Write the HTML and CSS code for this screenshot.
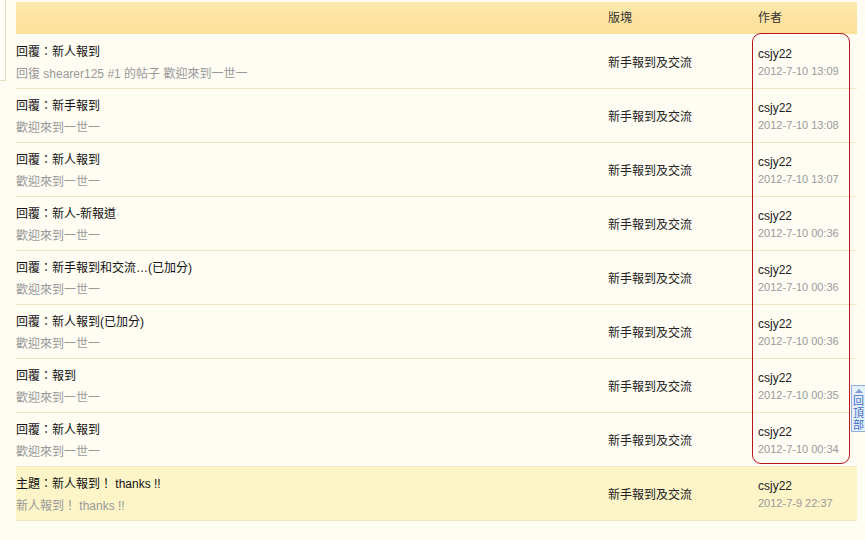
FILE: index.html
```html
<!DOCTYPE html>
<html>
<head>
<meta charset="utf-8">
<link rel="stylesheet" href="styles.css">
</head>
<body>
<div class="side-edge"></div>
<div class="list">
  <div class="head">
    <div class="c1"></div>
    <div class="c2">版塊</div>
    <div class="c3">作者</div>
  </div>
  <div class="row">
    <div class="c1"><div class="t">回覆：新人報到</div><div class="s">回復 shearer125 #1 的帖子 歡迎來到一世一</div></div>
    <div class="c2">新手報到及交流</div>
    <div class="c3"><div class="u">csjy22</div><div class="d">2012-7-10 13:09</div></div>
  </div>
  <div class="row">
    <div class="c1"><div class="t">回覆：新手報到</div><div class="s">歡迎來到一世一</div></div>
    <div class="c2">新手報到及交流</div>
    <div class="c3"><div class="u">csjy22</div><div class="d">2012-7-10 13:08</div></div>
  </div>
  <div class="row">
    <div class="c1"><div class="t">回覆：新人報到</div><div class="s">歡迎來到一世一</div></div>
    <div class="c2">新手報到及交流</div>
    <div class="c3"><div class="u">csjy22</div><div class="d">2012-7-10 13:07</div></div>
  </div>
  <div class="row">
    <div class="c1"><div class="t">回覆：新人-新報道</div><div class="s">歡迎來到一世一</div></div>
    <div class="c2">新手報到及交流</div>
    <div class="c3"><div class="u">csjy22</div><div class="d">2012-7-10 00:36</div></div>
  </div>
  <div class="row">
    <div class="c1"><div class="t">回覆：新手報到和交流…(已加分)</div><div class="s">歡迎來到一世一</div></div>
    <div class="c2">新手報到及交流</div>
    <div class="c3"><div class="u">csjy22</div><div class="d">2012-7-10 00:36</div></div>
  </div>
  <div class="row">
    <div class="c1"><div class="t">回覆：新人報到(已加分)</div><div class="s">歡迎來到一世一</div></div>
    <div class="c2">新手報到及交流</div>
    <div class="c3"><div class="u">csjy22</div><div class="d">2012-7-10 00:36</div></div>
  </div>
  <div class="row">
    <div class="c1"><div class="t">回覆：報到</div><div class="s">歡迎來到一世一</div></div>
    <div class="c2">新手報到及交流</div>
    <div class="c3"><div class="u">csjy22</div><div class="d">2012-7-10 00:35</div></div>
  </div>
  <div class="row">
    <div class="c1"><div class="t">回覆：新人報到</div><div class="s">歡迎來到一世一</div></div>
    <div class="c2">新手報到及交流</div>
    <div class="c3"><div class="u">csjy22</div><div class="d">2012-7-10 00:34</div></div>
  </div>
  <div class="row topic">
    <div class="c1"><div class="t">主題：新人報到！ thanks !!</div><div class="s">新人報到！ thanks !!</div></div>
    <div class="c2">新手報到及交流</div>
    <div class="c3"><div class="u">csjy22</div><div class="d">2012-7-9 22:37</div></div>
  </div>
  <div class="mark"></div>
</div>
<div class="totop"><span class="arrow"></span><span class="ch">回</span><span class="ch">頂</span><span class="ch">部</span></div>
</body>
</html>
```
FILE: styles.css
```css
html, body {
  margin: 0;
  padding: 0;
  background: #fffcf3;
  font-family: "Liberation Sans", "Noto Sans CJK TC", sans-serif;
  font-size: 12px;
  color: #222;
  overflow: hidden;
}
.side-edge {
  position: absolute;
  left: 0;
  top: 0;
  width: 5px;
  height: 80px;
  border-right: 1px solid #e6dcc0;
  border-bottom: 1px solid #e6dcc0;
}
.list {
  position: relative;
  margin: 2px 0 0 16px;
  width: 841px;
}
.head, .row {
  display: grid;
  grid-template-columns: 592px 150px 1fr;
}
.head {
  height: 32px;
  align-items: center;
  background: linear-gradient(#fdeab2 0%, #fde4a4 40%, #fcdf98 100%);
  color: #333;
  margin-bottom: 1px;
  padding-bottom: 3px;
  box-sizing: border-box;
}
.head .c1 { height: 100%; }
.row {
  height: 53px;
  border-bottom: 1px solid #f0e6c6;
  align-items: center;
}
.row.topic {
  background: #fdf4c8;
}
.row .c1 {
  align-self: start;
  padding-top: 9px;
}
.t {
  line-height: 16px;
  color: #111;
}
.s {
  margin-top: 6px;
  line-height: 16px;
  color: #999;
}
.row .c2 {
  color: #222;
}
.row .c3 {
  align-self: start;
  padding-top: 11px;
}
.u {
  line-height: 16px;
  color: #222;
}
.d {
  margin-top: 2px;
  line-height: 14px;
  font-size: 11px;
  color: #9a9a9a;
}
.mark {
  position: absolute;
  left: 736px;
  top: 31px;
  width: 96px;
  height: 429px;
  border: 1px solid #b8141c;
  border-radius: 9px;
}
.totop {
  position: absolute;
  left: 851px;
  top: 385px;
  width: 16px;
  height: 47px;
  background: #e6effc;
  border: 1px solid #8fb0e0;
  color: #3a6fc4;
  box-sizing: border-box;
  padding: 9px 0 0 1px;
  display: flex;
  flex-direction: column;
}
.ch {
  display: block;
  font-size: 11px;
  line-height: 12px;
  height: 12px;
  overflow: hidden;
}
.arrow {
  position: absolute;
  left: 3px;
  top: 3px;
  width: 0;
  height: 0;
  border-left: 4px solid transparent;
  border-right: 4px solid transparent;
  border-bottom: 4px solid #7d9cc8;
}
```
